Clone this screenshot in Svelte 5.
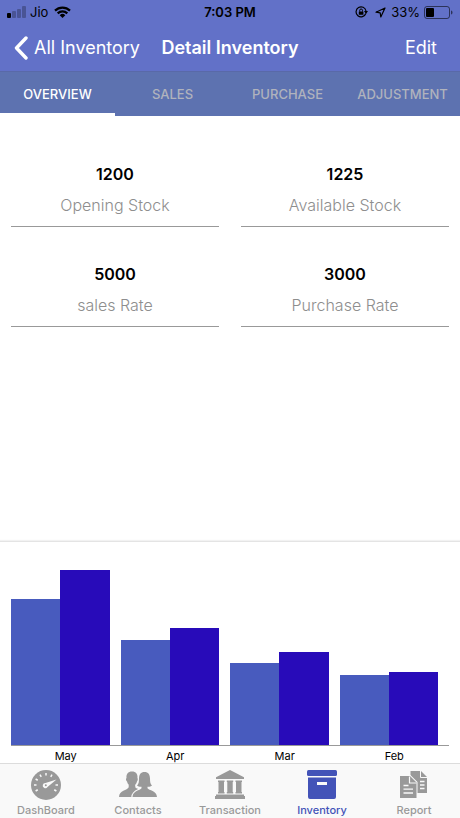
<script lang="ts">
  const tabs = ['Overview', 'Sales', 'Purchase', 'Adjustment'];
  let activeTab = $state('Overview');

  const stats = [
    { value: '1200', label: 'Opening Stock' },
    { value: '1225', label: 'Available Stock' },
    { value: '5000', label: 'sales Rate' },
    { value: '3000', label: 'Purchase Rate' },
  ];

  const months = [
    { name: 'May', opening: 50, closing: 60 },
    { name: 'Apr', opening: 36, closing: 40 },
    { name: 'Mar', opening: 28, closing: 32 },
    { name: 'Feb', opening: 24, closing: 25 },
  ];
  const peak = Math.max(...months.map((m) => Math.max(m.opening, m.closing)));
  const percent = (n: number) => (n / peak) * 100;

  const navItems = ['DashBoard', 'Contacts', 'Transaction', 'Inventory', 'Report'];
  let activeNav = $state('Inventory');

  const ticks = [-120, -90, -60, -30, 0, 30, 90, 120];
</script>

<div class="screen">
  <header>
    <div class="status">
      <div class="status-side">
        <svg width="19" height="12" viewBox="0 0 19 12" aria-hidden="true">
          <rect x="0" y="7" width="4" height="5" rx="1" />
          <g opacity="0.25">
            <rect x="5" y="5" width="4" height="7" rx="1" />
            <rect x="10" y="3" width="4" height="9" rx="1" />
            <rect x="15" y="0" width="4" height="12" rx="1" />
          </g>
        </svg>
        <span>Jio</span>
        <svg class="wifi" width="17" height="12" viewBox="0 0 17 12" aria-hidden="true">
          <g fill="none" stroke="currentColor" stroke-width="2.2">
            <path d="M1 4.6a10.7 10.7 0 0 1 15 0" />
            <path d="M3.7 7.4a6.9 6.9 0 0 1 9.6 0" />
          </g>
          <path d="M8.5 12 5.7 9.2a4 4 0 0 1 5.6 0z" />
        </svg>
      </div>
      <span class="clock">7:03 PM</span>
      <div class="status-side right">
        <svg width="13" height="12" viewBox="0 0 13 12" aria-hidden="true">
          <path d="M10.8 7.5a5 5 0 1 1 .2-2.5" fill="none" stroke="currentColor" stroke-width="1.2" />
          <path d="M9 5h4l-2 3z" />
          <rect x="3.8" y="5.4" width="4.6" height="3.4" rx=".4" />
          <path d="M4.7 5.6V4.4a1.4 1.4 0 0 1 2.800 0v1.2" fill="none" stroke="currentColor" />
        </svg>
        <svg class="arrow" width="11" height="11" viewBox="0 0 11 11" aria-hidden="true">
          <path d="M10 1 1 5.200l4.200.6.6 4.200z" fill="none" stroke="currentColor" stroke-width="1.2" stroke-linejoin="round" />
        </svg>
        <span>33%</span>
        <svg width="29" height="13" viewBox="0 0 29 13" aria-hidden="true">
          <rect x=".5" y=".5" width="25" height="12" rx="2.5" fill="none" stroke="currentColor" opacity=".55" />
          <rect x="2" y="2" width="8" height="9" rx="1" />
          <path d="M27 4.500c2 .6 2 3.400 0 4z" opacity=".55" />
        </svg>
      </div>
    </div>

    <div class="navbar">
      <button class="back">
        <svg width="14" height="24" viewBox="0 0 14 24" aria-hidden="true">
          <path d="M12 2 2.5 12 12 22" fill="none" stroke="currentColor" stroke-width="3.4" stroke-linecap="round" stroke-linejoin="round" />
        </svg>
        All Inventory
      </button>
      <h1>Detail Inventory</h1>
      <button class="edit">Edit</button>
    </div>
  </header>

  <div class="tabs" role="tablist">
    {#each tabs as tab}
      <button role="tab" aria-selected={activeTab === tab} class:active={activeTab === tab} onclick={() => (activeTab = tab)}>
        {tab}
      </button>
    {/each}
  </div>

  <main>
    <dl class="stats">
      {#each stats as stat}
        <div class="stat">
          <dt>{stat.label}</dt>
          <dd>{stat.value}</dd>
        </div>
      {/each}
    </dl>

    <section class="chart" aria-label="Stock by month">
      <div class="plot">
        {#each months as month}
          <div class="group">
            <div class="bar opening" style="height: {percent(month.opening)}%"></div>
            <div class="bar closing" style="height: {percent(month.closing)}%"></div>
          </div>
        {/each}
      </div>
      <div class="months">
        {#each months as month}
          <span>{month.name}</span>
        {/each}
      </div>
    </section>
  </main>

  <nav>
    {#each navItems as item}
      <button class:active={activeNav === item} onclick={() => (activeNav = item)}>
        <svg width="38" height="32" viewBox="0 0 38 32" aria-hidden="true">
          {#if item === 'DashBoard'}
            <circle cx="19" cy="16" r="15" />
            <g stroke="#f9f9f9" stroke-width="1.5">
              {#each ticks as angle}
                <path d="M19 4v2.500" transform="rotate({angle} 19 16)" />
              {/each}
            </g>
            <path d="M29.500 10.500 20.500 18a2.600 2.600 0 1 1-2-4z" fill="#f9f9f9" />
            <circle cx="18.800" cy="16.200" r="1" />
          {:else if item === 'Contacts'}
            <path d="M13 2.500c4 0 5.800 2.600 5.500 6.500 1 .5.500 3-.5 3.500-.4 1.500-1 2.500-1.700 3.200v2.500c.7 1.500 4.700 2 6.200 3.300V28H0c.2-7 8.300-6.500 9.700-9.800v-2.500c-.7-.7-1.300-1.700-1.700-3.200-1-.5-1.500-3-.5-3.500-.3-3.900 1.500-6.500 5.500-6.500z" />
            <path d="M25.500 3c3.800 0 5.500 2.700 5.500 6.500 0 3.500.3 5.500 2 7-1 1-2.700 1.300-4.500 1.200v1.500c1.500 2.300 9.200 2 9.500 8.800H13.500c.3-6.800 7.500-6.500 9-8.800v-1.500c-1.800.1-3.500-.2-4.500-1.200 1.700-1.500 2-3.500 2-7 0-3.800 1.700-6.500 5.500-6.500z" stroke="#f9f9f9" stroke-width="2.4" paint-order="stroke" />
          {:else if item === 'Transaction'}
            <path d="M19 1 33 8.200V10H5V8.200z" />
            <path d="M7 11.500h6.500V13H13v10h.5v1.500H7V23h.5V13H7zM15.800 11.500h6.400V13h-.5v10h.5v1.500h-6.400V23h.5V13h-.5zM24.500 11.500H31V13h-.5v10h.5v1.500h-6.500V23h.5V13h-.5z" />
            <path d="M5 25.500h28V27h1v3H4v-3h1z" />
          {:else if item === 'Inventory'}
            <rect x="4" y="1" width="30" height="6" rx="1.5" />
            <path fill-rule="evenodd" d="M5 8.500h28V28a2 2 0 0 1-2 2H7a2 2 0 0 1-2-2zM14 13v3h10v-3z" />
          {:else}
            <path d="M15.500 2H26l6 6v16H15.500z" />
            <path d="M25.500 2v6.500H32" fill="none" stroke="#f9f9f9" stroke-width="1" />
            <path d="M25 12.500h4.500M25 16h4.500M25 19.500h4.500" stroke="#f9f9f9" stroke-width="1.3" />
            <path d="M5 7h10l6.500 6.500V29H5z" stroke="#f9f9f9" stroke-width="2" paint-order="stroke" />
            <path d="M14.500 7.500v6.500H21.500" fill="none" stroke="#f9f9f9" stroke-width="1.2" />
            <path d="M8.500 16.500h5M8.500 20.200h9.500M8.500 24h9.500" stroke="#f9f9f9" stroke-width="1.3" />
          {/if}
        </svg>
        {item}
      </button>
    {/each}
  </nav>
</div>

<style>
  :global(body) {
    margin: 0;
  }
  .screen {
    display: flex;
    flex-direction: column;
    min-height: 100vh;
    background: #fff;
    color: #000;
    font-family: Inter, 'Liberation Sans', sans-serif;
  }
  button {
    margin: 0;
    padding: 0;
    border: 0;
    background: none;
    color: inherit;
    font: inherit;
    cursor: pointer;
  }
  svg {
    display: block;
    flex: none;
    fill: currentColor;
  }

  header {
    background: #6271c8;
  }
  .status {
    display: flex;
    align-items: center;
    height: 24px;
    padding: 0 7px;
    font-size: 13px;
  }
  .status-side {
    display: flex;
    flex: 1;
    align-items: center;
    gap: 4px;
  }
  .status-side.right {
    justify-content: flex-end;
  }
  .wifi {
    margin-left: 2px;
  }
  .arrow {
    margin: 0 1px 0 3px;
  }
  .clock {
    font-weight: 600;
  }

  .navbar {
    display: grid;
    grid-template-columns: 1fr auto 1fr;
    align-items: center;
    height: 47px;
    padding: 0 14px;
    color: #fff;
    font-size: 18px;
  }
  .back {
    display: flex;
    align-items: center;
    gap: 6px;
    white-space: nowrap;
  }
  h1 {
    margin: 0;
    font-size: 18px;
    font-weight: 600;
  }
  .edit {
    justify-self: end;
    padding: 0 9px;
  }

  .tabs {
    display: grid;
    grid-template-columns: repeat(4, 1fr);
    height: 45px;
    background: #5d72b0;
    box-shadow: inset 0 1px #5969a8;
  }
  .tabs button {
    padding-top: 3px;
    border-bottom: 3px solid transparent;
    color: #b0b3bd;
    font-size: 13px;
    font-weight: 500;
    text-transform: uppercase;
  }
  .tabs button.active {
    border-color: #fff;
    color: #fff;
  }

  main {
    display: flex;
    flex: 1;
    flex-direction: column;
    justify-content: space-between;
  }
  .stats {
    display: grid;
    grid-template-columns: 1fr 1fr;
    column-gap: 22px;
    margin: 0;
    padding: 11px;
  }
  .stat {
    display: flex;
    flex-direction: column-reverse;
    gap: 11px;
    padding: 37px 0 11px;
    border-bottom: 1px solid #999;
    line-height: 20px;
    text-align: center;
  }
  dt {
    color: #8e8e8e;
    font-size: 16px;
    font-weight: 300;
  }
  dd {
    margin: 0;
    font-size: 16px;
    font-weight: 600;
  }

  .chart {
    padding: 28px 11px 0;
    border-top: 1px solid #e4e4e4;
    box-shadow: 0 -1px 1px #f2f2f2;
  }
  .plot {
    display: grid;
    grid-template-columns: repeat(4, 1fr);
    height: 175px;
    border-bottom: 1px solid #999;
  }
  .group {
    display: flex;
    align-items: flex-end;
    padding-right: 10%;
  }
  .bar {
    flex: 1;
  }
  .opening {
    background: #485bbe;
  }
  .closing {
    background: #280bb9;
  }
  .months {
    display: grid;
    grid-template-columns: repeat(4, 1fr);
    padding-top: 3px;
    font-size: 11px;
    line-height: 14px;
    text-align: center;
  }

  nav {
    display: grid;
    grid-template-columns: repeat(5, 1fr);
    height: 54px;
    border-top: 1px solid #dcdcdc;
    background: #f9f9f9;
  }
  nav button {
    display: flex;
    flex-direction: column;
    align-items: center;
    gap: 2px;
    padding-top: 5px;
    color: #999;
    font-size: 11px;
    font-weight: 500;
    line-height: 14px;
  }
  nav button.active {
    color: #4353b8;
  }
</style>
